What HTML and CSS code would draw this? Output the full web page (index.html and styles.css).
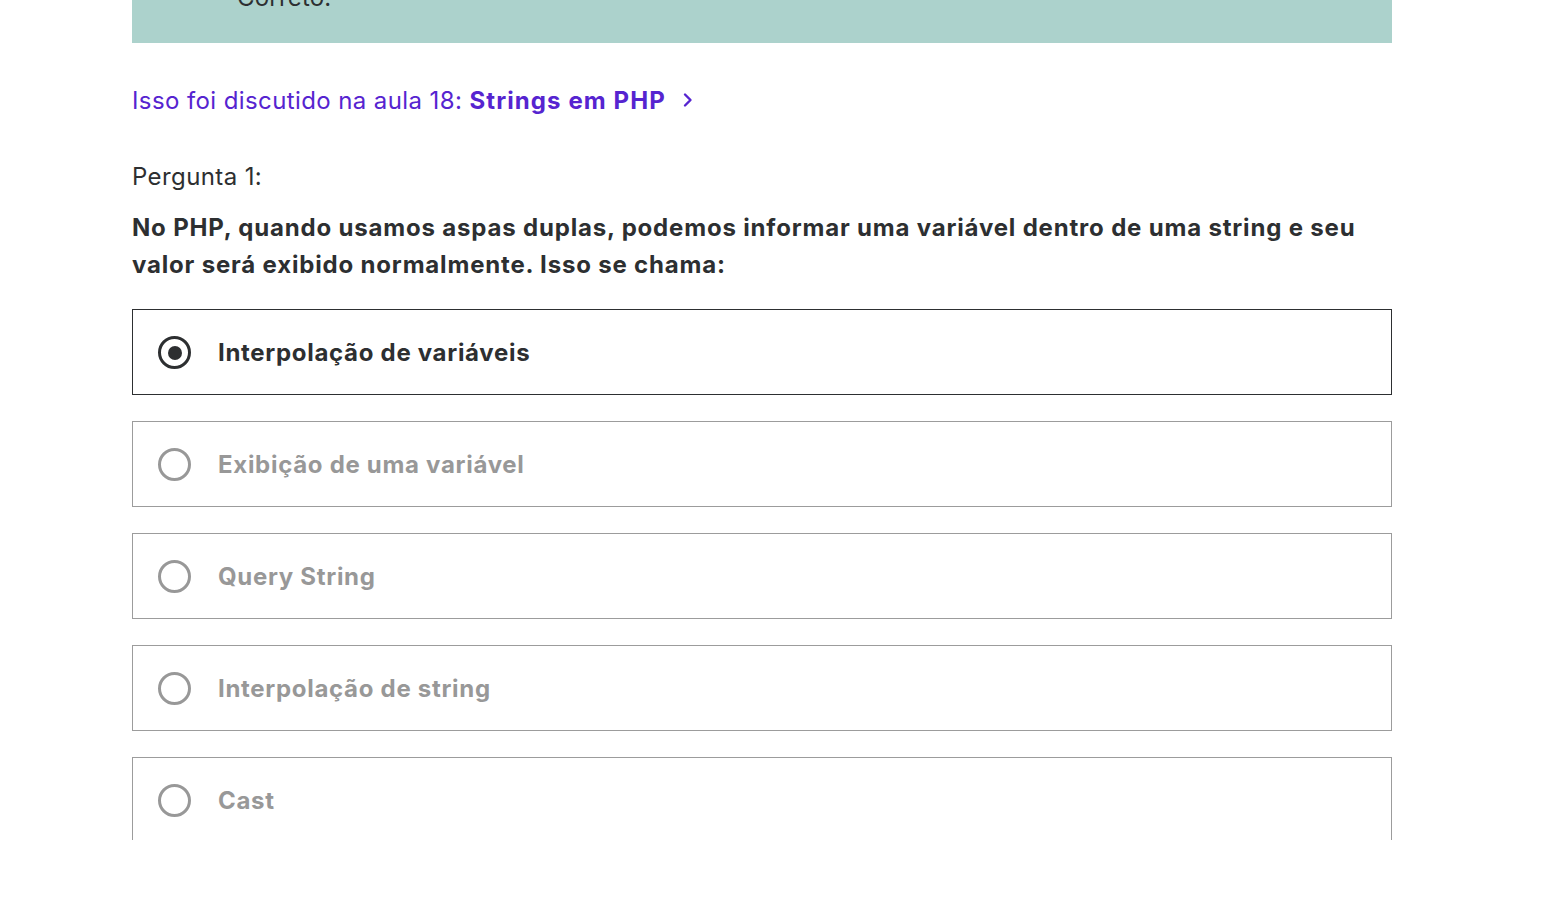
FILE: index.html
```html
<!DOCTYPE html>
<html lang="pt">
<head>
<meta charset="utf-8">
<title>Quiz</title>
<link rel="stylesheet" href="styles.css">
</head>
<body>
<div class="viewport">
  <div class="content">
    <div class="banner">
      <span class="banner-text">Correto!</span>
    </div>
    <a class="lecture-link" href="#">
      <span>Isso foi discutido na aula 18: </span><strong>Strings em PHP</strong>
      <svg class="chev" width="12" height="16" viewBox="0 0 12 16" aria-hidden="true"><path d="M3 2.5 L8.5 8 L3 13.5" fill="none" stroke="currentColor" stroke-width="2.4" stroke-linecap="round" stroke-linejoin="round"/></svg>
    </a>
    <div class="q-label">Pergunta 1:</div>
    <div class="q-text">No PHP, quando usamos aspas duplas, podemos informar uma variável dentro de uma string e seu valor será exibido normalmente. Isso se chama:</div>
    <div class="options">
      <label class="option selected"><span class="radio"></span><span class="opt-text">Interpolação de variáveis</span></label>
      <label class="option"><span class="radio"></span><span class="opt-text">Exibição de uma variável</span></label>
      <label class="option"><span class="radio"></span><span class="opt-text">Query String</span></label>
      <label class="option"><span class="radio"></span><span class="opt-text">Interpolação de string</span></label>
      <label class="option"><span class="radio"></span><span class="opt-text">Cast</span></label>
    </div>
  </div>
</div>
<div class="footer-space"></div>
</body>
</html>
```
FILE: styles.css
```css
* { box-sizing: border-box; }
html, body { margin: 0; padding: 0; background: #fff; }
body {
  font-family: Inter, "Liberation Sans", Arial, sans-serif;
  color: #2d2f31;
  font-size: 24px;
  letter-spacing: 0.4px;
}
.viewport {
  height: 840px;
  overflow: hidden;
}
.content {
  width: 1260px;
  margin-left: 132px;
}
.banner {
  background: #acd2cc;
  margin-top: -57px;
  height: 100px;
  padding: 40px 0 0 105px;
}
.banner-text {
  font-size: 24px;
  line-height: 24px;
  color: #2d2f31;
  letter-spacing: 0.2px;
}
.lecture-link {
  display: flex;
  align-items: center;
  margin-top: 39px;
  height: 36px;
  color: #5624d0;
  text-decoration: none;
  font-size: 24px;
  white-space: pre;
}
.lecture-link strong { font-weight: 700; letter-spacing: 1.1px; }
.chev { margin-left: 16px; }
.q-label {
  margin-top: 41px;
  line-height: 36px;
  font-size: 24px;
}
.q-text {
  margin-top: 14px;
  font-weight: 700;
  font-size: 24px;
  line-height: 37px;
  letter-spacing: 0.82px;
}
.options {
  margin-top: 26px;
  display: flex;
  flex-direction: column;
  gap: 26px;
}
.option {
  display: flex;
  align-items: center;
  height: 86px;
  border: 1px solid #9c9c9c;
  padding-left: 25px;
  padding-top: 1px;
  color: #989898;
  font-weight: 700;
  letter-spacing: 0.7px;
  flex-shrink: 0;
}
.option.selected {
  border-color: #2d2f31;
  color: #2d2f31;
}
.radio {
  width: 33px;
  height: 33px;
  border: 3px solid currentColor;
  border-radius: 50%;
  display: flex;
  align-items: center;
  justify-content: center;
  flex-shrink: 0;
}
.option.selected .radio::after {
  content: "";
  width: 14px;
  height: 14px;
  border-radius: 50%;
  background: currentColor;
}
.opt-text {
  margin-left: 27px;
}
.footer-space { height: 79px; }
```
